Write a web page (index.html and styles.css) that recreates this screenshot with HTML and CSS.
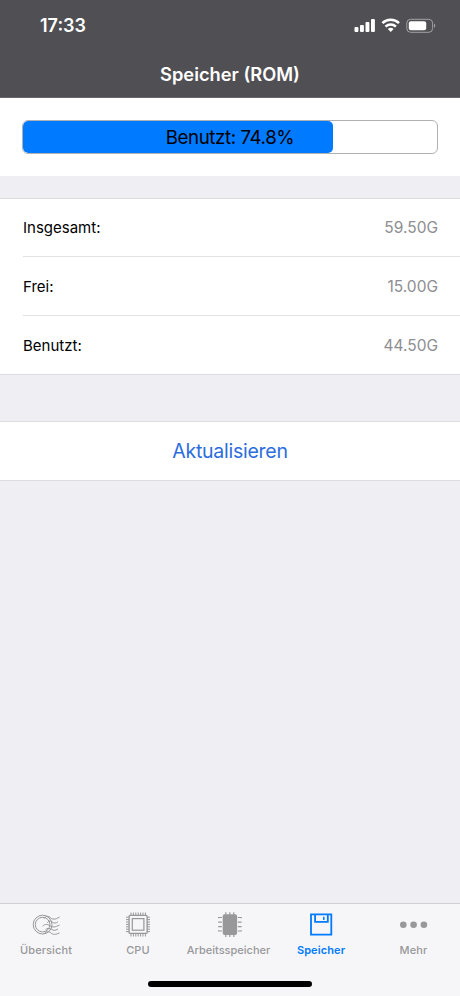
FILE: index.html
```html
<!DOCTYPE html>
<html lang="de">
<head>
<meta charset="utf-8">
<title>Speicher (ROM)</title>
<link rel="stylesheet" href="styles.css">
</head>
<body>
<div class="app">
  <header class="header">
    <div class="status">
      <span class="time">17:33</span>
      <svg class="status-icons" width="84" height="18" viewBox="0 0 84 18" fill="#fff">
        <rect x="0.5" y="10" width="3.9" height="5" rx="1"/>
        <rect x="6" y="8" width="3.9" height="7" rx="1"/>
        <rect x="11.5" y="5" width="3.9" height="10" rx="1"/>
        <rect x="17" y="2" width="3.9" height="13" rx="1"/>
        <g fill="none" stroke="#fff" stroke-width="2.5">
          <path d="M28.4 6.2a11.8 11.8 0 0 1 16.6 0"/>
          <path d="M31.5 9.7a7.4 7.4 0 0 1 10.4 0"/>
        </g>
        <path d="M33.8 12.1a4.2 4.2 0 0 1 5.8 0L36.7 15.1z"/>
        <rect x="52.8" y="2.3" width="25.8" height="13" rx="3.8" fill="none" stroke="#a2a2a5"/>
        <rect x="54.8" y="4.3" width="17.4" height="9" rx="2"/>
        <path d="M80 6.5q2.6 2.1 0 4.4z" fill="#a2a2a5"/>
      </svg>
    </div>
    <h1 class="title">Speicher (ROM)</h1>
  </header>

  <main class="content">
    <section class="usage">
      <div class="bar">
        <div class="bar-fill" style="width:74.8%"></div>
        <span class="bar-label">Benutzt: 74.8%</span>
      </div>
    </section>
    <dl class="list">
      <div class="row"><dt>Insgesamt:</dt><dd>59.50G</dd></div>
      <div class="row"><dt>Frei:</dt><dd>15.00G</dd></div>
      <div class="row"><dt>Benutzt:</dt><dd>44.50G</dd></div>
    </dl>
    <button class="refresh">Aktualisieren</button>
  </main>

  <nav class="tabs">
    <a class="tab">
      <svg width="30" height="30" viewBox="0 0 30 30" fill="none" stroke="currentColor">
        <circle cx="11.6" cy="14.6" r="9.4"/>
        <circle cx="11.6" cy="14.6" r="7.3"/>
        <path d="M13 8.6c2.5-3.4 4.8-2.4 6.6-.8s4.400 2.200 8.900-.8M16.300 12.500c2-2.200 3.600-1.600 5.200-.4s3.400 1.400 5.500-.4M11.500 16.400c2.500-3 5-2.200 7.500-.6s5 1.700 9.500-.8M14.500 19.800c2-2 4-1.600 6-.4s3.600 1.400 6.500-.4M13 23.800c2.500-3 5-2.400 7-.8s4.500 2 8.500-.1"/>
      </svg>
      <span>Übersicht</span>
    </a>
    <a class="tab">
      <svg width="30" height="30" viewBox="0 0 30 30" fill="none" stroke="currentColor">
        <rect x="6.1" y="5.4" width="18" height="18" rx="1" stroke-width="1.3"/>
        <rect x="9.3" y="8.6" width="11.6" height="11.6" stroke-width="1.2"/>
        <path d="M8 2.5v3M10.4 2.5v3M12.8 2.5v3M15.2 2.5v3M17.6 2.5v3M20 2.5v3M22.4 2.5v3M8 23.5v3M10.4 23.5v3M12.8 23.5v3M15.2 23.5v3M17.6 23.5v3M20 23.5v3M22.4 23.5v3M3 7.2h3M3 9.6h3M3 12h3M3 14.4h3M3 16.8h3M3 19.2h3M3 21.6h3M24 7.2h3M24 9.6h3M24 12h3M24 14.4h3M24 16.8h3M24 19.2h3M24 21.6h3"/>
      </svg>
      <span>CPU</span>
    </a>
    <a class="tab memory">
      <svg width="30" height="30" viewBox="0 0 30 30" fill="none" stroke="currentColor" stroke-width="1.2">
        <rect x="7.7" y="4.2" width="14.4" height="20.8" rx="2" fill="currentColor" stroke="none"/>
        <path d="M10.8 2.3v2.5M14.8 2.3v2.5M18.8 2.3v2.5M10.8 24.5V27M14.8 24.5V27M18.8 24.5V27M3.600 8.300V7.500h3.300M3.200 12.100h3.700M3.200 16.600h3.700M3.600 20.200V21h3.300M22.900 7.500h3.300v.8M22.900 12.100h3.700M22.900 16.600h3.700M22.900 21h3.300v-.8"/>
      </svg>
      <span>Arbeitsspeicher</span>
    </a>
    <a class="tab active">
      <svg width="30" height="30" viewBox="0 0 30 30" fill="none" stroke="currentColor" stroke-width="1.8">
        <path d="M4 4.400h20.300v20.300H4zM8.100 4.800v7.100h12.700V4.800"/>
        <path d="M16.800 6.800v3.200" stroke-width="1.500"/>
      </svg>
      <span>Speicher</span>
    </a>
    <a class="tab">
      <svg width="30" height="30" viewBox="0 0 30 30" fill="currentColor">
        <circle cx="4.3" cy="14.8" r="3.3"/>
        <circle cx="14.6" cy="14.8" r="3.3"/>
        <circle cx="24.9" cy="14.8" r="3.3"/>
      </svg>
      <span class="more">Mehr</span>
    </a>
    <div class="home"></div>
  </nav>
</div>
</body>
</html>
```
FILE: styles.css
```css
* { box-sizing: border-box; }
body { margin: 0; font-family: Inter, "Liberation Sans", sans-serif; color: #000; }
.app { width: 460px; height: 996px; display: flex; flex-direction: column; background: #efeef3; }
.header { height: 98px; background: #504f53; color: #fff; border-bottom: 1px solid #68676b; }
.status { height: 50px; display: flex; justify-content: space-between; align-items: center; padding: 0 22px 0 40px; }
.time { font-size: 18px; font-weight: 600; }
.status-icons { margin-top: 1px; }
.title { margin: 0; height: 48px; line-height: 48px; text-align: center; font-size: 18.3px; font-weight: 600; }
.content { flex: 1; }
.usage { height: 78px; padding: 22px 22px 0; background: #fff; }
.bar { position: relative; height: 34px; border: 1px solid #b1b1b4; border-radius: 6px; overflow: hidden; }
.bar-fill { height: 100%; background: #007aff; border-radius: 5px; }
.bar-label { position: absolute; inset: 0; line-height: 34px; text-align: center; font-size: 18.7px; letter-spacing: -.4px; }
.list { margin: 22px 0 0; background: #fff; border: solid #dcdbe0; border-width: 1px 0; padding-left: 23px; }
.row { height: 59px; display: flex; align-items: center; justify-content: space-between; padding-right: 22px; border-bottom: 1px solid #e3e3e6; font-size: 15px; }
.row:first-child { height: 58px; }
.row:last-child { height: 58px; border-bottom: 0; }
.row dd { margin: 0; color: #8d8d92; font-size: 15.5px; }
.refresh { display: block; width: 100%; height: 60px; margin-top: 46px; padding: 0; border: solid #dcdbe0; border-width: 1px 0; background: #fff; color: #2c6ddd; font: 400 19.5px Inter, sans-serif; letter-spacing: -.25px; }
.tabs { position: relative; height: 93px; display: flex; align-items: flex-start; border-top: 1px solid #d0cfd4; background: #f6f6f8; padding-top: 6px; }
.tab { flex: 1 1 0; min-width: 0; display: flex; flex-direction: column; align-items: center; color: #98989b; font-size: 11px; font-weight: 500; letter-spacing: .1px; }
.tab svg { display: block; }
.tab span { line-height: 14px; margin-top: 3px; white-space: nowrap; }
.memory { letter-spacing: 0; }
.memory span { padding-right: 3px; }
.active { color: #007aff; }
.active span { font-weight: 600; padding-right: 2px; }
.tab .more { padding-right: 1px; }
.home { position: absolute; left: 148px; bottom: 9px; width: 164px; height: 6px; border-radius: 3px; background: #000; }
```
